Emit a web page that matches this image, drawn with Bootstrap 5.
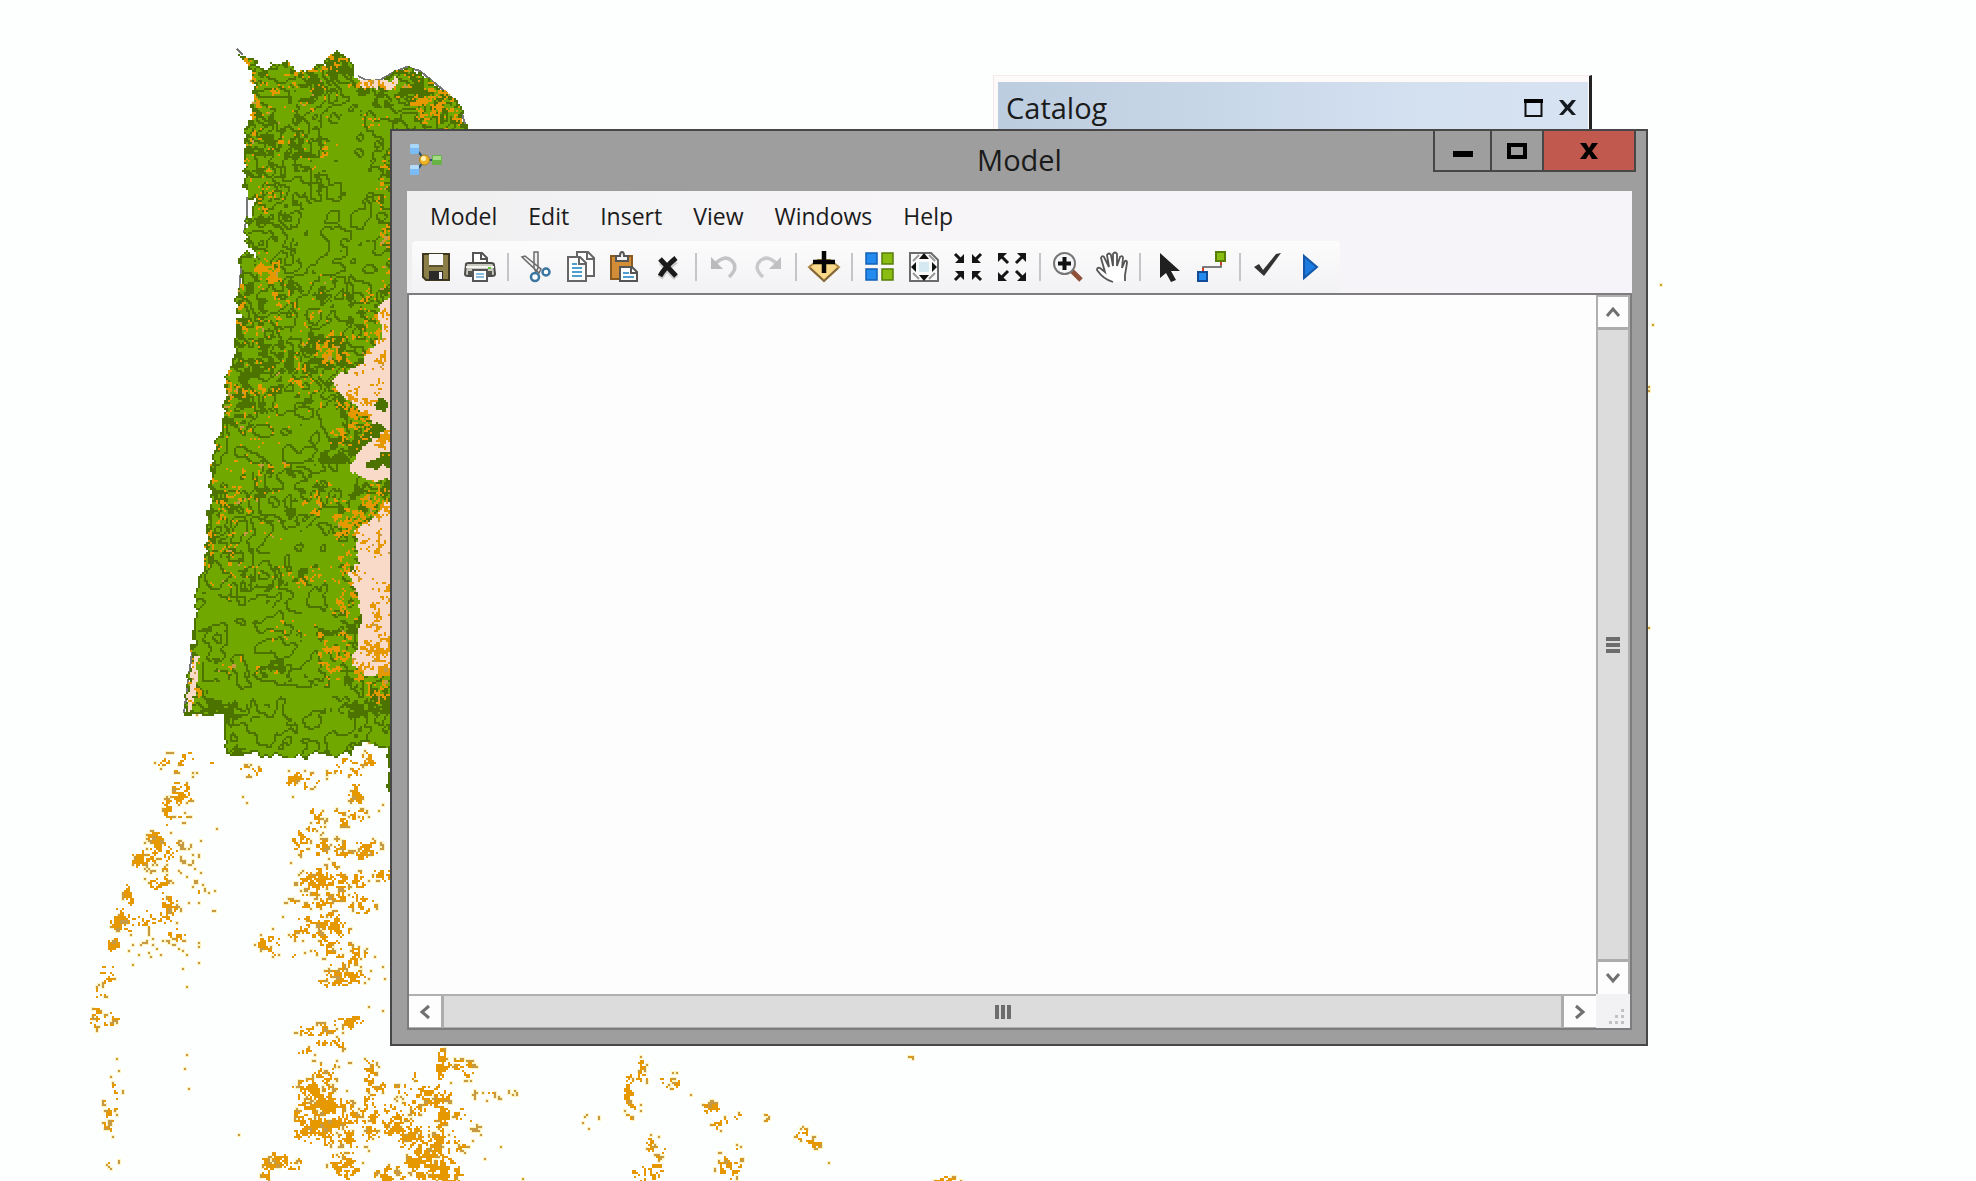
<!DOCTYPE html>
<html lang="en">
<head>
<meta charset="utf-8">
<meta name="viewport" content="width=device-width, initial-scale=1">
<title>Model</title>
<link href="https://cdn.jsdelivr.net/npm/bootstrap@5.3.0/dist/css/bootstrap.min.css" rel="stylesheet">
<style>
body{font-family:"Open Sans","Noto Sans",sans-serif;background:#fdfefe;color:#1b1b1b;overflow:hidden}
.desk{min-height:100vh}
.map-layer{left:0;top:0;pointer-events:none}
button{font:inherit;color:inherit;padding:0;border:0;background:none}
.catalog-win{left:993px;right:384px;top:75px;height:120px;border-right:3px solid #222;border-top:1px solid #f3ebec;border-left:1px solid #f0e8e8;padding:6px 1px 0 4px;background:#fffafa}
.catalog-head{height:60px;padding:0 12px 8px 8px;background:linear-gradient(90deg,#bccddf,#d3e0f0 70%,#d8e3f2);font-size:29px}
.catalog-head svg{display:block}
.model-win{left:390px;right:328px;top:129px;bottom:135px;background:#9e9e9e;border:2px solid #474747;padding:0 14px 14px 15px}
.title-bar{height:60px;padding-bottom:2px;font-size:29px;flex:none}
.app-icon{left:0;top:12px}
.win-ctl{right:-4px;top:0;height:41px;border:2px solid #474747;border-top:0}
.win-ctl button{display:flex;align-items:center;justify-content:center;width:55px}
.win-ctl button+button{border-left:2px solid #474747}
.win-ctl .b-max{width:52px}
.win-ctl .b-close{width:92px;background:#c2594f}
.bars{background:linear-gradient(90deg,#efeff0,#f7f5f8 40%,#f6f4f8)}
.menu-row{height:50px;padding-left:6px;font-size:23px}
.menu-row button{padding:0 16px 0 15px}
.menu-row button:first-child{padding-left:17px}
.tools{height:52px;margin-left:5px;padding-left:2px;padding-right:6px;background:linear-gradient(#fcfcfd,#f2f1f3);border-radius:4px}
.tools button{width:44px;height:44px;display:flex;align-items:center;justify-content:center}
.tool-sep{width:2px;height:28px;margin:0 5px;background:#c5c5c8}
.work{border:2px solid #7d7d7f;background:#fdfdfd;min-height:0}
.sheet{background:#fdfdfe}
.vbar{width:34px;border-left:2px solid #b0b0b0;border-right:2px solid #b0b0b0}
.hbar{height:34px;border-top:2px solid #b0b0b0;border-bottom:1px solid #b0b0b0}
.vbar button,.hbar button{flex:none;display:flex;align-items:center;justify-content:center;background:#fdfdfd}
.vbar button{height:32px}
.vbar button:first-child{border-top:2px solid #b0b0b0}
.hbar button{width:32px}
.vthumb{background:#dcdcdc;border-top:3px solid #acacac;border-bottom:3px solid #acacac}
.hthumb{background:#dcdcdc;border-left:3px solid #acacac;border-right:3px solid #acacac}
.grip-box{width:34px;height:34px;background:#f2f1f3}
</style>
<script src="https://cdn.jsdelivr.net/npm/bootstrap@5.3.0/dist/js/bootstrap.bundle.min.js"></script>
</head>
<body>
<main class="desk position-relative">
<svg id="map" class="map-layer position-absolute" width="1976" height="1181" viewBox="0 0 1976 1181" shape-rendering="crispEdges" role="img" aria-label="Land cover map"></svg>

<section class="catalog-win position-absolute" aria-label="Catalog">
  <div class="catalog-head d-flex align-items-center">
    <span class="flex-grow-1">Catalog</span>
    <button aria-label="Maximize catalog" class="me-3"><svg width="19" height="20"><path d="M1.500 2v16h16V2" fill="none" stroke="#111" stroke-width="2"/><path d="M0 1h19v4H0z"/></svg></button>
    <button aria-label="Close catalog"><svg width="17" height="18"><path d="M0 1h4l4.500 5L13 1h4l-6 8 6 7h-4l-4.500-5L4 16H0l6-7z" fill="#151a20"/></svg></button>
  </div>
</section>

<section class="model-win position-absolute d-flex flex-column" aria-label="Model">
  <header class="title-bar position-relative d-flex align-items-center justify-content-center">
    <svg class="app-icon position-absolute" width="36" height="34" viewBox="0 0 36 34"><path d="M9 6l9 11M9 28l9-11h10" fill="none" stroke="#2a5270" stroke-width="2"/><rect x="3" y="1" width="9" height="10" rx="1.500" fill="#7cbcf6"/><rect x="3" y="1" width="9" height="4" rx="1.500" fill="#a9d6fb"/><rect x="3" y="22" width="9" height="10" rx="1.500" fill="#7cbcf6"/><rect x="3" y="22" width="9" height="4" rx="1.500" fill="#b5dcfc"/><circle cx="17.500" cy="17" r="5" fill="#efb526" stroke="#b17f13"/><circle cx="16.500" cy="15.500" r="2.500" fill="#fff0b8"/><rect x="25" y="12" width="10" height="10" rx="1.500" fill="#68b343"/><rect x="26" y="13" width="8" height="4" fill="#a5da86"/></svg>
    <span>Model</span>
    <div class="win-ctl position-absolute d-flex">
      <button aria-label="Minimize"><svg width="20" height="20"><path d="M0 10h20v6H0z"/></svg></button>
      <button class="b-max" aria-label="Maximize"><svg width="20" height="18"><path d="M2 3h16v12H2z" fill="none" stroke="#000" stroke-width="4"/></svg></button>
      <button class="b-close" aria-label="Close"><svg width="20" height="18"><path d="M1 1h6l3 5 3-5h6l-6 8 6 8h-6l-3-5-3 5H1l6-8z"/></svg></button>
    </div>
  </header>
  <div class="bars">
    <nav class="menu-row d-flex" aria-label="Menu"><button>Model</button><button>Edit</button><button>Insert</button><button>View</button><button>Windows</button><button>Help</button></nav>
    <div class="tools d-inline-flex align-items-center align-top" role="toolbar">
      <button aria-label="Save"><svg width="32" height="32" viewBox="0 0 32 32"><path d="M3 3h26v26H6l-3-3z" fill="#8b7f47" stroke="#3d371f" stroke-width="2"/><path d="M9 3h14v11H9z" fill="#fafafa"/><path d="M9 14h14v2H9z" fill="#5a5230"/><path d="M9 20h14v9H9z" fill="#2b2a28"/><path d="M19 21h3v7h-3z" fill="#f0f0f0"/></svg></button>
      <button aria-label="Print"><svg width="34" height="32" viewBox="0 0 34 32"><path d="M10 14V2h9l5 5v7" fill="#fff" stroke="#555" stroke-width="2"/><path d="M18 2v6h6" fill="none" stroke="#555" stroke-width="2"/><path d="M3 13q0-1 3-1h22q3 0 3 2l1 9q0 2-3 2H5q-3 0-3-2z" fill="#c9c9c0" stroke="#4b4b48" stroke-width="2"/><path d="M3 15h28v2H3z" fill="#f5f5f2"/><path d="M5 20h24v4H5z" fill="#55554f"/><path d="M25 16h3v2h-3z" fill="#60c830"/><path d="M10 19h14v11H10z" fill="#fff" stroke="#555" stroke-width="2"/><path d="M13 23h8M13 26h8" stroke="#6aa8d0" stroke-width="1.500"/></svg></button>
      <i class="tool-sep"></i>
      <button aria-label="Cut"><svg width="32" height="32" viewBox="0 0 32 32"><path d="M14 1h4v16l-2 4-2-4zM2 6l3-1 16 13-2 4z" fill="#f0f0f0" stroke="#6b6b6b" stroke-width="1.500"/><circle cx="15" cy="26" r="4" fill="#fff" stroke="#3a76a0" stroke-width="2.500"/><circle cx="26" cy="21" r="3.500" fill="#fff" stroke="#3a76a0" stroke-width="2.500"/></svg></button>
      <button aria-label="Copy"><svg width="32" height="32" viewBox="0 0 32 32"><path d="M13 1h11l6 6v18H13z" fill="#fff" stroke="#666" stroke-width="2"/><path d="M23 1v7h7" fill="none" stroke="#666" stroke-width="2"/><path d="M4 6h12l6 6v18H4z" fill="#fff" stroke="#666" stroke-width="2"/><path d="M15 6v7h7" fill="none" stroke="#666" stroke-width="2"/><path d="M8 13h5M8 17h10M8 21h10M8 25h10" stroke="#4e9fd0" stroke-width="2"/></svg></button>
      <button aria-label="Paste"><svg width="32" height="32" viewBox="0 0 32 32"><path d="M3 5h21v23H3z" fill="#d38d36" stroke="#8b5a20" stroke-width="2"/><path d="M8 10V5h4q0-4 2-4t2 4h4v5z" fill="#f0f0f0" stroke="#555" stroke-width="2"/><path d="M12 16h12l5 5v9H12z" fill="#fff" stroke="#555" stroke-width="2"/><path d="M23 16v6h6" fill="none" stroke="#555" stroke-width="2"/><path d="M15 22h6M15 26h11" stroke="#4e9fd0" stroke-width="2"/></svg></button>
      <button aria-label="Delete"><svg width="32" height="32" viewBox="0 0 32 32"><path d="M9 11l15 16M24 10Q14 17 8 27" fill="none" stroke="#ccc" stroke-width="6"/><path d="M8 8l16 17M24 7Q14 15 8 25" fill="none" stroke="#1a1a1a" stroke-width="5"/></svg></button>
      <i class="tool-sep"></i>
      <button aria-label="Undo"><svg width="32" height="32" viewBox="0 0 32 32"><path d="M7 13Q17 3 24 10t-3 16" fill="none" stroke="#c3c3c5" stroke-width="3.500"/><path d="M3 6v12h12z" fill="#bababc"/></svg></button>
      <button aria-label="Redo"><svg width="32" height="32" viewBox="0 0 32 32"><path d="M25 13Q15 3 8 10t3 16" fill="none" stroke="#c9c9cb" stroke-width="3.500"/><path d="M29 6v12H17z" fill="#c0c0c2"/></svg></button>
      <i class="tool-sep"></i>
      <button aria-label="Add data"><svg width="34" height="32" viewBox="0 0 34 32"><path d="M2 16l9-7h12l9 7-15 14z" fill="#f9d987" stroke="#b28b46" stroke-width="2"/><path d="M3 17l14 13 14-13" fill="none" stroke="#84683a" stroke-width="2"/><path d="M17 0v22M6 11h22" stroke="#050505" stroke-width="4.500"/></svg></button>
      <i class="tool-sep"></i>
      <button aria-label="Auto layout"><svg width="32" height="32" viewBox="0 0 32 32"><g stroke-width="1.500"><path d="M2 2h11v11H2zM2 18h11v11H2z" fill="#238bed" stroke="#1260b5"/><path d="M18 2h11v11H18zM18 18h11v11H18z" fill="#8abd12" stroke="#577d08"/></g></svg></button>
      <button aria-label="Full extent"><svg width="32" height="32" viewBox="0 0 32 32"><path d="M2 2h21l7 7v21H2z" fill="#fafafa" stroke="#6b6b6b" stroke-width="2"/><path d="M5 10l6-6M21 4l6 6M5 22l6 6M27 22l-6 6" stroke="#999" stroke-width="2"/><path d="M11 11h10v10H11z" fill="#d4e9f2"/><path d="M16 2l5 6H11zM16 30l5-6H11zM3 16l5-5v10zM29 16l-5-5v10z" fill="#111"/></svg></button>
      <button aria-label="Fixed zoom in"><svg width="32" height="32" viewBox="0 0 32 32"><g stroke="#151515" stroke-width="3" fill="#151515"><path d="M3 3l6 6M29 3l-6 6M3 29l6-6M29 29l-6-6"/><path stroke="none" d="M12 3v9H3zM20 3v9h9zM12 29v-9H3zM20 29v-9h9z"/></g></svg></button>
      <button aria-label="Fixed zoom out"><svg width="32" height="32" viewBox="0 0 32 32"><g stroke="#151515" stroke-width="3" fill="#151515"><path d="M6 6l6 6M26 6l-6 6M6 26l6-6M26 26l-6-6"/><path stroke="none" d="M2 2h9l-9 9zM30 2h-9l9 9zM2 30h9l-9-9zM30 30h-9l9-9z"/></g></svg></button>
      <i class="tool-sep"></i>
      <button aria-label="Zoom in"><svg width="32" height="32" viewBox="0 0 32 32"><path d="M20 20l9 9" stroke="#8e5038" stroke-width="5"/><circle cx="12.500" cy="12.500" r="10.500" fill="#f5f8fa" stroke="#777" stroke-width="2"/><path d="M12.500 6v13M6 12.500h13" stroke="#111" stroke-width="4"/></svg></button>
      <button aria-label="Pan"><svg width="34" height="32" viewBox="0 0 34 32"><path d="M18 31Q8 28 2 19q0-3 3-2l5 4L6 7q1-3 3-1l5 10-2-12q2-3 4 0l2 11V3q2-3 4 0v12l3-9q3-2 3 1l-1 10 3-7q2-1 2 2l-2 12v6" fill="#fff" stroke="#555" stroke-width="1.800"/></svg></button>
      <i class="tool-sep"></i>
      <button aria-label="Select"><svg width="32" height="32" viewBox="0 0 32 32"><path d="M8 2v25l6-5 5 9 5-2-5-9h9z" fill="#202020"/></svg></button>
      <button aria-label="Connect"><svg width="32" height="32" viewBox="0 0 32 32"><path d="M7 21v-5h18v-6" fill="none" stroke="#555" stroke-width="1.500"/><path d="M7 21v-4M25 14v-4" stroke="#d63b20" stroke-width="2"/><path d="M20 1h9v9h-9z" fill="#8abd12" stroke="#577d08" stroke-width="2"/><path d="M2 21h9v9H2z" fill="#238bed" stroke="#124c96" stroke-width="2"/></svg></button>
      <i class="tool-sep"></i>
      <button aria-label="Validate"><svg width="32" height="32" viewBox="0 0 32 32"><path d="M2 16l5-3 4 6L24 3l5-1-17 23z" fill="#333"/></svg></button>
      <button aria-label="Run"><svg width="32" height="32" viewBox="0 0 32 32"><path d="M8 5l13 11L8 27z" fill="#1d7be0" stroke="#1459a8" stroke-width="2"/></svg></button>
    </div>
  </div>
  <div class="work d-flex flex-column flex-grow-1">
    <div class="d-flex flex-grow-1">
      <div class="sheet flex-grow-1"></div>
      <div class="vbar d-flex flex-column">
        <button aria-label="Scroll up"><svg width="16" height="12"><path d="M2 10l6-7 6 7" fill="none" stroke="#707070" stroke-width="3"/></svg></button>
        <div class="vthumb flex-grow-1 d-flex align-items-center justify-content-center"><svg width="14" height="16"><path d="M0 2h14M0 8h14M0 14h14" stroke="#6d6d6d" stroke-width="4"/></svg></div>
        <button aria-label="Scroll down"><svg width="16" height="12"><path d="M2 2l6 7 6-7" fill="none" stroke="#707070" stroke-width="3"/></svg></button>
      </div>
    </div>
    <div class="d-flex">
      <div class="hbar d-flex flex-grow-1">
        <button aria-label="Scroll left"><svg width="12" height="16"><path d="M10 2L3 8l7 6" fill="none" stroke="#707070" stroke-width="3"/></svg></button>
        <div class="hthumb flex-grow-1 d-flex align-items-center justify-content-center"><svg width="16" height="14"><path d="M2 0v14M8 0v14M14 0v14" stroke="#6d6d6d" stroke-width="4"/></svg></div>
        <button aria-label="Scroll right"><svg width="12" height="16"><path d="M2 2l7 6-7 6" fill="none" stroke="#707070" stroke-width="3"/></svg></button>
      </div>
      <div class="grip-box"><svg width="34" height="34"><path d="M25 15h3v3h-3zM19 21h3v3h-3zM25 21h3v3h-3zM13 27h3v3h-3zM19 27h3v3h-3zM25 27h3v3h-3z" fill="#c2c2c4"/></svg></div>
    </div>
  </div>
</section>
</main>
<script>
// Land cover raster: two-pixel cells classified by seeded noise, grouped in runs of one colour.
const C = 2;
const coast = [[237,49],[247,57],[262,65],[265,70],[270,62],[283,62],[287,58],[292,66],[299,69],[322,65],[323,58],[335,51],[343,52],[353,63],[355,74],[363,79],[380,80],[394,71],[407,67],[420,72],[434,82],[447,93],[457,100],[460,108],[461,118],[467,128],[467,134],[394,134],[394,792],[387,792],[387,745],[353,743],[352,750],[333,758],[325,753],[313,752],[305,758],[299,754],[287,758],[272,755],[223,752],[224,715],[182,712],[185,690],[192,647],[195,593],[203,560],[207,517],[212,450],[222,417],[225,377],[233,360],[238,313],[232,298],[238,293],[242,270],[237,258],[243,250],[257,258],[246,240],[243,233],[248,212],[257,200],[248,197],[242,187],[245,160],[243,130],[241,127],[252,118],[252,77],[243,57]];
const bare = [[[383,300],[394,296],[394,480],[385,480],[360,478],[348,467],[357,450],[370,440],[370,420],[357,408],[337,393],[330,380],[345,370],[362,363],[363,353],[380,340],[378,315]],
 [[394,498],[383,500],[370,520],[353,530],[358,563],[348,573],[360,603],[360,623],[350,663],[367,675],[394,667]],
 [[357,74],[380,80],[396,76],[396,86],[376,88],[362,84]],[[186,709],[192,655],[197,655],[192,709]]];
const copse = [[374,430,8,6],[384,456,9,5],[372,464,7,4],[380,404,5,5],[389,462,5,7]];
const calm = [[350,195,22,62],[325,235,24,28],[277,100,14,16],[278,440,24,22],[232,458,16,20],[330,555,18,34],[240,635,42,26],[330,605,22,20],[305,735,50,20],[320,655,28,16],[300,700,24,14],[215,575,18,14],[290,545,16,20],[365,270,14,24],[300,310,18,12],[350,140,14,20],[375,735,16,22],[310,425,24,20],[222,440,14,14],[375,120,12,10],[260,690,40,10]];
// x, y, radius x, radius y, strength
const spots = [[248,62,10,6,.5],[253,95,5,25,.6],[313,71,14,8,.8],[280,85,20,12,.35],[333,60,9,8,.6],[378,83,22,7,.75],[408,82,16,12,.5],[432,98,22,18,.75],[450,115,13,16,.6],[258,135,12,8,.45],[278,140,12,5,.35],[323,152,6,6,.6],[370,120,14,6,.4],[243,160,3,35,.6],[262,188,9,22,.4],[384,180,9,32,.4],[386,235,7,20,.6],[268,270,13,16,.9],[243,312,4,35,.5],[268,314,22,10,.35],[258,332,8,18,.45],[378,320,18,35,.5],[336,352,18,18,.5],[305,378,14,12,.55],[228,397,7,22,.55],[250,391,20,8,.5],[350,402,14,10,.55],[358,418,12,20,.85],[346,436,13,10,.75],[384,442,10,11,.8],[240,468,8,10,.5],[262,466,20,5,.4],[228,500,18,12,.65],[378,500,16,14,.75],[350,520,16,17,.85],[320,500,14,14,.35],[213,545,7,16,.5],[242,563,20,4,.5],[300,575,26,10,.42],[346,585,14,30,.5],[302,630,30,10,.3],[192,675,9,28,.6],[338,655,18,24,.65],[355,670,12,10,.8],[388,510,9,8,.8],[380,610,12,35,.55],[366,648,8,7,.7],[384,660,13,24,.75],[382,688,14,12,.8],[250,665,24,8,.35],[378,330,18,50,.4],[368,360,18,18,.4],[378,385,14,14,.35],[270,120,50,60,.12],[280,350,60,60,.14],[230,480,40,80,.2],[380,545,16,16,.4],
 [172,762,16,10,.4],[187,757,8,6,.6],[179,792,11,9,.9],[166,808,6,14,.95],[175,815,12,6,.5],[156,842,8,10,.95],[142,858,10,8,.8],[166,850,12,18,.5],[160,884,10,8,.7],[168,905,9,16,.7],[128,895,5,14,.55],[122,920,10,12,.95],[115,944,7,8,.8],[148,918,18,12,.35],[176,935,9,6,.65],[106,972,8,9,.65],[100,991,6,7,.5],[98,1018,8,9,.9],[113,1018,5,8,.5],[195,770,14,5,.2],[212,763,5,3,.7],[250,770,12,5,.6],[296,779,22,7,.45],[300,787,6,5,.7],[345,771,18,5,.6],[369,757,7,7,.65],[347,764,14,9,.4],[355,793,6,11,.75],[314,820,8,12,.6],[348,816,16,8,.65],[300,840,9,14,.4],[322,848,9,8,.8],[352,848,22,9,.85],[338,870,12,8,.5],[324,880,22,10,.95],[308,888,10,8,.7],[340,890,18,12,.7],[357,880,9,8,.6],[380,875,16,6,.5],[331,904,16,9,.6],[300,910,15,12,.5],[360,905,13,9,.6],[326,925,20,15,.7],[300,932,18,7,.55],[268,944,10,10,.7],[330,946,18,9,.6],[351,956,18,9,.5],[296,950,6,9,.5],[340,973,12,10,.95],[350,976,14,6,.7],[328,982,10,4,.7],[160,860,24,20,.2],[197,890,14,9,.25],[166,945,30,9,.2],[182,850,14,8,.2],
 [320,1029,22,6,.55],[350,1021,14,6,.75],[330,1043,14,6,.5],[330,1061,14,4,.5],[304,1051,8,5,.35],[323,1075,12,7,.85],[310,1093,16,12,1.05],[325,1105,20,16,.9],[320,1125,22,14,1.1],[300,1118,12,10,.6],[340,1138,15,10,.8],[355,1115,15,9,.6],[370,1085,7,25,.75],[385,1085,10,6,.4],[370,1124,8,18,.7],[392,1118,12,15,.75],[275,1160,12,8,.9],[292,1163,8,6,.8],[265,1176,4,8,.7],[345,1160,14,18,.7],[384,1175,15,9,.7],[300,1134,14,5,.4],[440,1062,4,22,.8],[455,1064,14,5,.5],[468,1070,6,8,.6],[428,1095,14,10,.9],[414,1105,10,8,.8],[442,1105,8,26,.8],[455,1112,12,9,.6],[395,1125,18,10,.7],[412,1135,16,12,.9],[430,1145,18,14,.9],[420,1160,18,10,.9],[445,1170,14,14,.9],[430,1170,16,12,.8],[400,1172,14,10,.5],[470,1120,12,12,.25],[455,1140,12,10,.5],[412,1080,6,10,.4],[488,1093,20,6,.25],[405,1090,14,10,.3],[116,1090,5,20,.4],[112,1100,9,10,.4],[108,1122,5,14,.7],[111,1160,5,8,.4],
 [629,1091,5,14,.9],[641,1072,5,11,.7],[632,1108,6,10,.5],[670,1081,9,7,.75],[711,1107,7,7,.8],[720,1123,8,6,.5],[737,1116,4,3,.8],[767,1117,3,3,.6],[801,1133,6,5,.7],[812,1141,10,6,.5],[650,1144,6,8,.5],[656,1160,8,20,.65],[640,1173,8,8,.6],[730,1168,11,16,.65],[735,1150,5,6,.4],[590,1119,6,5,.4],[945,1179,12,3,.5],[913,1056,4,2,.7],[586,1124,5,3,.4]];
const dots = [[184,812],[166,874],[217,828],[201,840],[200,873],[199,902],[213,910],[214,910],[132,965],[182,968],[199,962],[186,986],[187,1054],[184,1068],[189,1088],[239,1134],[116,1058],[118,1070],[243,796],[246,803],[293,797],[369,742],[382,804],[378,810],[336,836],[310,823],[291,863],[273,928],[283,917],[370,970],[382,966],[384,978],[369,1006],[382,1010],[485,1158],[500,1146],[523,1178],[829,1162],[691,1094],[1660,284],[1652,324],[1648,386],[1648,390],[1648,627]];
function hash(x,y,s){let h=(x*374761393+y*668265263+s*974634777)|0;h=Math.imul(h^(h>>>13),1274126177);h^=h>>>16;return (h>>>0)/4294967296}
function noise(x,y,k,s){x/=k;y/=k;const i=Math.floor(x),j=Math.floor(y);let u=x-i,v=y-j;u=u*u*(3-2*u);v=v*v*(3-2*v);
 return (hash(i,j,s)*(1-u)+hash(i+1,j,s)*u)*(1-v)+(hash(i,j+1,s)*(1-u)+hash(i+1,j+1,s)*u)*v}
function inside(p,x,y){let r=false;for(let i=0,j=p.length-1;i<p.length;j=i++){const a=p[i],b=p[j];if((a[1]>y)!==(b[1]>y)&&x<(b[0]-a[0])*(y-a[1])/(b[1]-a[1])+a[0])r=!r}return r}
function field(list,x,y){let m=0;for(const s of list){const dx=(x-s[0])/s[2],dy=(y-s[1])/s[3],d=dx*dx+dy*dy;if(d<2.2)m=Math.max(m,(s[4]||1)*(1-d/2.2))}return m}
// Stand boundaries: a cell is on one where its band number differs from the next cell's.
function band(x,y,k){return Math.floor((noise(x,y,24,3)*.6+noise(x,y,9,4)*.3+noise(x,y,5,13)*.1)*k)}
const W=490,H=591,grid=[];
for(let j=0;j<H;j++){const row=[];for(let i=0;i<W;i++){
 const x=i*C,y=j*C,jx=x+(noise(x,y,5,1)-.5)*6,jy=y+(noise(x,y,5,2)-.5)*6;
 let c='';
 if(y>740&&y<1046&&x>392){row.push('');continue}
 const land=x<470&&y<794&&inside(coast,jx,jy);
 const f=field(spots,x,y),g=noise(x,y,6,7)*.3+noise(x,y,3.2,8)*.45+hash(i,j,9)*.25;
 if(land){
  c='g';
  const edge=!inside(coast,jx-2,jy)||!inside(coast,jx,jy-2)||!inside(coast,jx,jy+2)||!inside(coast,jx+2,jy);
  const q=field(calm,x,y),m=noise(x,y,30,5),k=q>.2?3:6,b=band(x,y,k);
  if(b!==band(x+C,y,k)||b!==band(x,y+C,k))c='d';
  if(noise(x,y,10,6)*.5+noise(x,y,5,11)*.5>.63+q*.4-(m-.5)*.3)c='d';
  if(bare.some(p=>inside(p,jx,jy)))c='p';
  if(field(copse,x,y)+(noise(x,y,4,14)-.5)*1.1>.42&&x>360)c=field(copse,x,y)>0?'d':c;
  if(edge&&c!=='p')c='d';
 }
 const sea=y<712&&!land;
 if(f>0&&!sea&&g>(land?.78:.75)-f*.4)c=(hash(i>>1,j>>1,12)>(land?.95:.86)||(!land&&f<.24))?'k':'o';
 row.push(c)}grid.push(row)}
for(const [x,y] of dots){const r=grid[y>>1];if(x<W*2)r[x>>1]='k'}
const paint={h:'#fff3bd',g:'#70a800',d:'#4c7300',p:'#f9d9c8',o:'#e69800',k:'#c69a45'},path={h:'',g:'',d:'',p:'',o:'',k:''};
grid.forEach((r,j)=>{for(let i=0;i<W;){const c=r[i];let e=i+1;while(e<W&&r[e]===c)e++;if(c){const w=(e-i)*C;path[c]+=`M${i*C} ${j*C}h${w}v2h-${w}z`;if(c==='k')path.h+=`M${i*C-1} ${j*C-1}h${w+2}v4h-${w+2}z`}i=e}});
for(const [x,y] of dots)if(x>=W*2){path.k+=`M${x} ${y}h2v2h-2z`;path.h+=`M${x-1} ${y-1}h4v4h-4z`}
let out=`<path fill="none" stroke="#777" stroke-width="2" d="M237 49l6 6M358 76l8 4h14l14-8 13-5 13 4 27 22 13 14 6 20M247 197v18l-3 18M242 255l-3 40M193 645l-9 68"/>`;
for(const k of 'hgdpok')out+=`<path fill="${paint[k]}" d="${path[k]}"/>`;
document.getElementById('map').innerHTML=out;
</script>
</body>
</html>
